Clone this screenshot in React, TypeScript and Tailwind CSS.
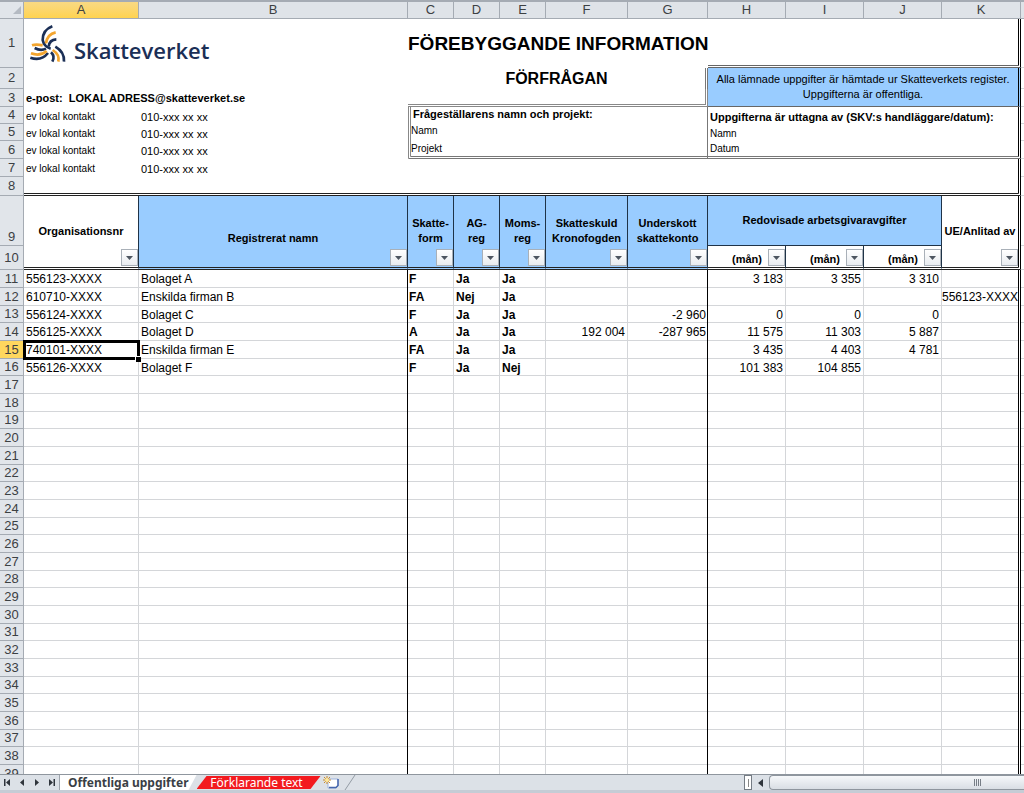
type Company = {
  orgnr: string
  name: string
  form: string
  ag: string
  moms: string
  kfm: string
  deficit: string
  months: string[]
  ue: string
}

const companies: Company[] = [
  { orgnr: "556123-XXXX", name: "Bolaget A", form: "F", ag: "Ja", moms: "Ja", kfm: "", deficit: "", months: ["3 183", "3 355", "3 310"], ue: "" },
  { orgnr: "610710-XXXX", name: "Enskilda firman B", form: "FA", ag: "Nej", moms: "Ja", kfm: "", deficit: "", months: ["", "", ""], ue: "556123-XXXX" },
  { orgnr: "556124-XXXX", name: "Bolaget C", form: "F", ag: "Ja", moms: "Ja", kfm: "", deficit: "-2 960", months: ["0", "0", "0"], ue: "" },
  { orgnr: "556125-XXXX", name: "Bolaget D", form: "A", ag: "Ja", moms: "Ja", kfm: "192 004", deficit: "-287 965", months: ["11 575", "11 303", "5 887"], ue: "" },
  { orgnr: "740101-XXXX", name: "Enskilda firman E", form: "FA", ag: "Ja", moms: "Ja", kfm: "", deficit: "", months: ["3 435", "4 403", "4 781"], ue: "" },
  { orgnr: "556126-XXXX", name: "Bolaget F", form: "F", ag: "Ja", moms: "Nej", kfm: "", deficit: "", months: ["101 383", "104 855", ""], ue: "" },
]

const emptyCompany: Company = { orgnr: "", name: "", form: "", ag: "", moms: "", kfm: "", deficit: "", months: ["", "", ""], ue: "" }

const letters = ["A", "B", "C", "D", "E", "F", "G", "H", "I", "J", "K"]
const FIRST_ROW = 11
const LAST_ROW = 39
const SELECTED_ROW = 15

const dataRows = Array.from({ length: LAST_ROW - FIRST_ROW + 1 }, (_, i) => ({
  nr: FIRST_ROW + i,
  company: companies[i] ?? emptyCompany,
}))

// the bottom line is a shadow so that it never cuts into the dark column borders
const rowLine = "shadow-[inset_0_-1px_#d4d6d9]"
const grid = `border-r ${rowLine}`
const kEdge = "border-r-[3px] [border-right-style:double] border-r-black"
const headBlue = "border-r border-r-[#1f3347] bg-[#99ccff] text-center font-bold text-[11px] leading-[15px]"
const doubleBottom = "border-b-[3px] [border-bottom-style:double] border-b-[#222]"
const boxLeft = "border-l-[3px] border-l-[#888] [border-left-style:double] border-r border-r-[#777]"

const Swirl = () => (
  <svg viewBox="0 0 132 132" className="h-11 w-11 shrink-0" fill="none" strokeWidth="8" aria-hidden="true">
    <g stroke="#1b2f56">
      <path d="M79 13 Q50 24 50 54 Q54 74 74 80" />
      <path d="M91 52 Q70 53 68 74" />
      <path d="M26 78 Q44 88 60 80" />
      <path d="M13 107 Q46 118 66 93" />
      <path d="M114 119 Q116 90 88 74" />
      <path d="M79 119 Q88 103 75 91" />
    </g>
    <g stroke="#f3a52f">
      <path d="M89 31 Q64 36 60 64" />
      <path d="M18 70 Q30 66 50 70" />
      <path d="M15 94 Q42 104 62 87" />
      <path d="M97 119 Q102 98 80 84" />
    </g>
  </svg>
)

const FilterButton = ({ label }: { label: string }) => (
  <button
    type="button"
    aria-label={`Filtrera ${label}`}
    className="flex h-[17px] w-[17px] shrink-0 items-center justify-center border border-[#a9b0b8] bg-linear-to-b from-white to-[#e8ebef]"
  >
    <svg viewBox="0 0 7 4" className="h-1 w-[7px]" aria-hidden="true">
      <polygon points="0,0 7,0 3.5,4" fill="#4d5560" />
    </svg>
  </button>
)

const RowHead = ({ nr, bottom = false }: { nr: number; bottom?: boolean }) => (
  <th
    scope="row"
    className={`border-r border-b border-[#a5abb3] text-center text-[13px] font-normal text-[#3c4043] ${
      nr === SELECTED_ROW ? "bg-[#ffd75e]" : "bg-[#e1e5ea]"
    } ${bottom ? "pb-px align-bottom" : "align-middle"}`}
  >
    {nr}
  </th>
)

const Margin = () => <td className={rowLine} />

const Contact = () => (
  <>
    <td className="pt-0.5 pl-[2px] text-[10px]">ev lokal kontakt</td>
    <td className="pt-0.5 pl-[2px] text-[11px]">010-xxx xx xx</td>
  </>
)

const InfoRows = () => (
  <>
    <tr className="h-[49px]">
      <RowHead nr={1} />
      <td colSpan={2}>
        <div className="flex items-center gap-1 pl-[2px]">
          <Swirl />
          <span className="pt-3 font-['Open_Sans',sans-serif] text-[22px] leading-6 font-semibold text-[#1b2f56]">Skatteverket</span>
        </div>
      </td>
      <td colSpan={5} className="text-center text-[19px] leading-6 font-bold whitespace-nowrap">FÖREBYGGANDE INFORMATION</td>
      <td colSpan={4} className={`border-b-[3px] [border-bottom-style:double] border-b-[#666] ${kEdge}`} />
      <Margin />
    </tr>
    <tr className="h-[21px]">
      <RowHead nr={2} />
      <td colSpan={2} />
      <td colSpan={5} className="border-r-[3px] [border-right-style:double] border-r-[#777] text-center text-base leading-4 font-bold">FÖRFRÅGAN</td>
      <td colSpan={4} rowSpan={2} className={`border-b border-b-[#666] bg-[#99ccff] text-center text-[11px] leading-[15px] ${kEdge}`}>
        Alla lämnade uppgifter är hämtade ur Skatteverkets register.
        <br />
        Uppgifterna är offentliga.
      </td>
      <Margin />
    </tr>
    <tr className="h-[18px]">
      <RowHead nr={3} />
      <td colSpan={2} className="pl-[2px] text-[11px] font-bold whitespace-pre">e-post:  LOKAL ADRESS@skatteverket.se</td>
      <td colSpan={5} className="border-r-[3px] border-b-[3px] border-double border-[#888]" />
      <Margin />
    </tr>
    <tr className="h-[17px]">
      <RowHead nr={4} />
      <Contact />
      <td colSpan={5} className={`${boxLeft} pl-[2px] align-top text-[11px] font-bold`}>Frågeställarens namn och projekt:</td>
      <td colSpan={4} className={`pt-0.5 pl-[2px] text-[11px] font-bold whitespace-nowrap ${kEdge}`}>Uppgifterna är uttagna av (SKV:s handläggare/datum):</td>
      <Margin />
    </tr>
    <tr className="h-[17px]">
      <RowHead nr={5} />
      <Contact />
      <td colSpan={5} className={`${boxLeft} align-top text-[10px]`}>Namn</td>
      <td colSpan={4} className={`pt-0.5 pl-[2px] text-[10px] ${kEdge}`}>Namn</td>
      <Margin />
    </tr>
    <tr className="h-[18px]">
      <RowHead nr={6} />
      <Contact />
      <td colSpan={5} className={`${boxLeft} border-b-[3px] border-b-[#777] [border-bottom-style:double] text-[10px]`}>Projekt</td>
      <td colSpan={4} className={`border-b-[3px] border-b-[#777] [border-bottom-style:double] pl-[2px] text-[10px] ${kEdge}`}>Datum</td>
      <Margin />
    </tr>
    <tr className="h-[18px]">
      <RowHead nr={7} />
      <Contact />
      <td colSpan={9} className={kEdge} />
      <Margin />
    </tr>
    <tr className="h-[19px]">
      <RowHead nr={8} />
      <td colSpan={11} className={`${kEdge} ${doubleBottom}`} />
      <Margin />
    </tr>
  </>
)

const narrowHeads = [
  ["Skatte-", "form"],
  ["AG-", "reg"],
  ["Moms-", "reg"],
  ["Skatteskuld", "Kronofogden"],
  ["Underskott", "skattekonto"],
]

const HeadingRows = () => (
  <>
    <tr className="h-[50px]">
      <RowHead nr={9} bottom />
      <td className="border-r border-r-[#1f3347] pb-[7px] text-center align-bottom text-[11px] leading-[15px] font-bold">Organisationsnr</td>
      <td className={`${headBlue} align-bottom`}>Registrerat namn</td>
      {narrowHeads.map(([top, bottom]) => (
        <td key={top} className={`${headBlue} align-bottom`}>
          {top}
          <br />
          {bottom}
        </td>
      ))}
      <td colSpan={3} className={`${headBlue} border-b border-b-[#1f3347]`}>Redovisade arbetsgivaravgifter</td>
      <td className={`pb-[7px] text-center align-bottom text-[11px] leading-[15px] font-bold whitespace-nowrap ${kEdge}`}>UE/Anlitad av</td>
      <Margin />
    </tr>
    <tr className="h-[24px]">
      <RowHead nr={10} />
      <td className={`border-r border-r-[#1f3347] align-bottom ${doubleBottom}`}>
        <div className="flex justify-end pb-px"><FilterButton label="Organisationsnr" /></div>
      </td>
      <td className={`${headBlue} align-bottom ${doubleBottom}`}>
        <div className="flex justify-end pb-px"><FilterButton label="Registrerat namn" /></div>
      </td>
      {narrowHeads.map(([top, bottom]) => (
        <td key={top} className={`${headBlue} align-bottom ${doubleBottom}`}>
          <div className="flex justify-end pb-px"><FilterButton label={`${top}${bottom}`} /></div>
        </td>
      ))}
      {["H", "I", "J"].map((col) => (
        <td key={col} className={`border-r border-r-[#1f3347] align-bottom ${doubleBottom}`}>
          <div className="flex items-end justify-end gap-1.5 pb-px text-[11px] font-bold">
            <span>(mån)</span>
            <FilterButton label={`månad ${col}`} />
          </div>
        </td>
      ))}
      <td className={`align-bottom ${kEdge} ${doubleBottom}`}>
        <div className="flex justify-end pb-px"><FilterButton label="UE/Anlitad av" /></div>
      </td>
      <Margin />
    </tr>
  </>
)

const DataRow = ({ nr, company }: { nr: number; company: Company }) => {
  const selected = nr === SELECTED_ROW
  return (
    <tr className={(nr - FIRST_ROW) % 3 === 2 ? "h-[17px]" : "h-[18px]"}>
      <RowHead nr={nr} />
      <td className={`${grid} border-r-[#d4d6d9] pl-[2px] ${selected ? "relative outline-[3px] -outline-offset-2 outline-black" : ""}`}>
        {company.orgnr}
        {selected ? <span className="absolute -right-[3px] -bottom-[3px] h-[6px] w-[6px] border-t border-l border-white bg-black" /> : null}
      </td>
      <td className={`${grid} border-r-black pl-[2px]`}>{company.name}</td>
      <td className={`${grid} border-r-[#d4d6d9] pl-px font-bold`}>{company.form}</td>
      <td className={`${grid} border-r-[#d4d6d9] pl-[2px] font-bold`}>{company.ag}</td>
      <td className={`${grid} border-r-[#d4d6d9] pl-[2px] font-bold`}>{company.moms}</td>
      <td className={`${grid} border-r-[#d4d6d9] pr-[2px] text-right`}>{company.kfm}</td>
      <td className={`${grid} border-r-black pr-px text-right`}>{company.deficit}</td>
      {company.months.map((value, i) => (
        <td key={i} className={`${grid} border-r-[#d4d6d9] pr-[2px] text-right`}>{value}</td>
      ))}
      <td className={`${rowLine} text-center whitespace-nowrap ${kEdge}`}>{company.ue}</td>
      <Margin />
    </tr>
  )
}

const navShapes = [
  { label: "Första bladet", d: "M0 0h1.5v7H0zM6 0v7L2 3.5z" },
  { label: "Föregående blad", d: "M5 0v7L1 3.5z" },
  { label: "Nästa blad", d: "M2 0v7l4-3.5z" },
  { label: "Sista bladet", d: "M1 0v7l4-3.5zM5.500 0H7v7H5.500z" },
]

const SheetBar = () => (
  <footer className="flex h-[19px] shrink-0 items-stretch border-t border-b-[3px] border-t-[#8f969e] border-b-[#c5ccd5] bg-[#dce1e7]">
    <div className="flex w-[60px] shrink-0 items-center justify-around border-r border-[#9da4ac]">
      {navShapes.map((shape) => (
        <button key={shape.label} type="button" aria-label={shape.label} className="flex h-3 w-3 items-center justify-center">
          <svg viewBox="0 0 7 7" className="h-[7px] w-[7px]" aria-hidden="true">
            <path d={shape.d} fill="#2f353c" />
          </svg>
        </button>
      ))}
    </div>
    <nav className="flex items-stretch text-xs leading-[15px]">
      <button type="button" className="bg-white px-2 font-['Noto_Sans',sans-serif] font-bold text-[#3a3f45] [clip-path:polygon(0_0,100%_0,calc(100%-8px)_100%,0_100%)]">
        Offentliga uppgifter
      </button>
      <button type="button" className="w-[124px] bg-[#f31a1f] pr-1 font-['Noto_Sans',sans-serif] text-white [clip-path:polygon(10px_1px,100%_1px,calc(100%-10px)_calc(100%-1px),0_calc(100%-1px))]">
        Förklarande text
      </button>
      <button type="button" aria-label="Infoga kalkylblad" className="flex items-center">
        <svg viewBox="0 0 36 15" className="h-[15px] w-9" aria-hidden="true">
          <path d="M7 4h10v7l-2 2H7z" fill="#fff" stroke="#9db2dc" strokeWidth="1" />
          <path d="M8 12.500h7l2-2V4" fill="none" stroke="#4667ad" strokeWidth="1.500" />
          <path d="M6 1v8M2 5h8M3 2l6 6M9 2L3 8" stroke="#c98a2b" strokeWidth="1" />
          <circle cx="6" cy="5" r="2" fill="#ffe89a" />
          <path d="M34 0L24 15" stroke="#949ba4" strokeWidth="1" />
        </svg>
      </button>
    </nav>
    <div className="ml-auto flex w-[280px] shrink-0 items-center">
      <div className="flex h-[15px] w-2 items-center justify-center border border-[#757c84] bg-white">
        <div className="h-2 w-px bg-[#888]" />
      </div>
      <button type="button" aria-label="Rulla åt vänster" className="flex h-[15px] w-[17px] items-center justify-center">
        <svg viewBox="0 0 5 8" className="h-2 w-[5px]" aria-hidden="true">
          <polygon points="5,0 5,8 0,4" fill="#2f353c" />
        </svg>
      </button>
      <div className="flex h-[15px] flex-1 items-center justify-center rounded-l-sm border border-r-0 border-[#8f969e] bg-linear-to-b from-[#f6f8fa] to-[#d9dee4] pl-40">
        <div className="flex gap-px">
          {[0, 1, 2, 3].map((i) => (
            <div key={i} className="h-[7px] w-px bg-[#777e86]" />
          ))}
        </div>
      </div>
    </div>
  </footer>
)

export default function App() {
  return (
    <div className="flex h-screen flex-col overflow-hidden bg-white font-['Liberation_Sans',Arial,sans-serif] text-black">
      <main className="min-h-0 flex-1 overflow-hidden">
        <table className="w-full table-fixed border-separate border-spacing-0 text-xs leading-[14px]">
          <colgroup>
            <col className="w-6" />
            <col className="w-[115px]" />
            <col />
            <col className="w-[46px]" />
            <col className="w-[46px]" />
            <col className="w-[46px]" />
            <col className="w-[82px]" />
            <col className="w-[80px]" />
            <col className="w-[78px]" />
            <col className="w-[78px]" />
            <col className="w-[78px]" />
            <col className="w-[79px]" />
            <col className="w-[3px]" />
          </colgroup>
          <thead>
            <tr className="h-[19px]">
              <td className="border-t-2 border-r border-b border-[#a5abb3] bg-[#e1e5ea]">
                <svg viewBox="0 0 10 10" className="ml-auto h-2.5 w-2.5" aria-hidden="true">
                  <polygon points="8,1 8,9 0,9" fill="#b4bac2" />
                </svg>
              </td>
              {letters.map((letter) => (
                <th
                  key={letter}
                  scope="col"
                  className={`border-t-2 border-r border-b border-[#a5abb3] text-[13px] font-normal text-[#3c4043] ${
                    letter === "A" ? "bg-linear-to-b from-[#f9d983] to-[#ffd34f]" : "bg-[#dfe3e8]"
                  }`}
                >
                  {letter}
                </th>
              ))}
              <td className="border-t-2 border-b border-[#a5abb3] bg-[#dfe3e8]" />
            </tr>
          </thead>
          <tbody>
            <InfoRows />
            <HeadingRows />
            {dataRows.map((row) => (
              <DataRow key={row.nr} nr={row.nr} company={row.company} />
            ))}
          </tbody>
        </table>
      </main>
      <SheetBar />
    </div>
  )
}
